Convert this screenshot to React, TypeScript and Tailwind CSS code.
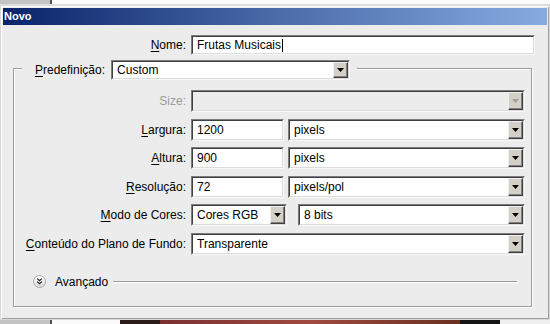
import React from "react";

function DropButton({ disabled = false }: { disabled?: boolean }) {
  return (
    <div className="w-[15px] h-full shrink-0 bg-[#d4d0c8] border border-t-[#f0f0f0] border-l-[#f0f0f0] border-r-[#404040] border-b-[#404040] shadow-[inset_-1px_-1px_0_#808080] flex items-center justify-center">
      <svg width="7" height="4" viewBox="0 0 7 4">
        <path d="M0 0H7L3.5 4Z" fill={disabled ? "#a0a0a0" : "#000"} />
      </svg>
    </div>
  );
}

function Sunken({
  className = "",
  children,
  bg = "bg-white",
}: {
  className?: string;
  children?: React.ReactNode;
  bg?: string;
}) {
  return (
    <div className={`flex border border-t-[#7c7c7c] border-l-[#7c7c7c] border-r-[#f8f8f8] border-b-[#f8f8f8] ${className}`}>
      <div className={`flex-1 flex min-w-0 border border-t-[#404040] border-l-[#404040] border-r-[#dcdcdc] border-b-[#dcdcdc] ${bg}`}>
        {children}
      </div>
    </div>
  );
}

function Combo({
  value,
  className = "",
  disabled = false,
}: {
  value: string;
  className?: string;
  disabled?: boolean;
}) {
  return (
    <Sunken className={className} bg={disabled ? "bg-[#ececec]" : "bg-white"}>
      <div className="flex-1 flex items-center pl-[4px] text-black whitespace-nowrap overflow-hidden">{value}</div>
      <DropButton disabled={disabled} />
    </Sunken>
  );
}

function Field({ value, className = "" }: { value: string; className?: string }) {
  return (
    <Sunken className={className}>
      <div className="flex-1 flex items-center pl-[4px] text-black whitespace-nowrap">{value}</div>
    </Sunken>
  );
}

function Label({ text, u = true, disabled = false }: { text: string; u?: boolean; disabled?: boolean }) {
  return (
    <div className={`w-[172px] shrink-0 text-right whitespace-nowrap ${disabled ? "text-[#9a9a9a]" : "text-black"}`}>
      {u ? (
        <>
          <span className="underline underline-offset-2">{text[0]}</span>
          {text.slice(1)}
        </>
      ) : (
        text
      )}
    </div>
  );
}

function Row({ children }: { children: React.ReactNode }) {
  return <div className="flex items-center h-[22px] gap-[5px]">{children}</div>;
}

export default function App() {
  return (
    <div className="w-[550px] h-[324px] overflow-hidden flex flex-col bg-[#ececec] font-['Liberation_Sans',Arial,sans-serif] text-[12px] leading-none">
      {/* top strip */}
      <div className="h-[5px] flex shrink-0 border-b border-[#e0e0e0]">
        <div className="w-[50px] bg-[#c4c4c4]" />
        <div className="w-[2px] bg-[#505050]" />
        <div className="flex-1 bg-[#fafafa]" />
      </div>

      {/* dialog */}
      <div className="h-[315px] shrink-0 flex flex-col bg-[#ececec] border border-[#d8d8d8] shadow-[inset_1px_1px_0_#fff,inset_-1px_-1px_0_#a0a0a0] p-[2px]">
        <div className="h-[17px] shrink-0 flex items-center pl-[1px] bg-gradient-to-r from-[#0a246a] via-[#4a6aa8] to-[#86abe0] text-white font-bold text-[11px]">
          Novo
        </div>

        <div className="flex-1 flex flex-col">
          {/* Nome */}
          <div className="flex items-center h-[20px] mt-[10px] gap-[5px]">
            <div className="w-[183px] text-right text-black">
              <span className="underline underline-offset-2">N</span>ome:
            </div>
            <Sunken className="w-[344px] h-[20px]">
              <div className="flex items-center pl-[4px] text-black whitespace-nowrap">
                Frutas Musicais
                <span className="inline-block w-[1px] h-[13px] bg-black ml-[1px]" />
              </div>
            </Sunken>
          </div>

          {/* group box */}
          <div className="ml-[10px] mt-[13px] w-[519px] h-[239px] border border-[#9c9c9c] shadow-[inset_1px_1px_0_#fff,1px_1px_0_#fff] flex flex-col">
            {/* legend */}
            <div className="-mt-[9px] ml-[8px] self-start flex items-center gap-[6px] pl-[13px] pr-[7px] bg-[#ececec] h-[20px]">
              <div className="text-black whitespace-nowrap">
                <span className="underline underline-offset-2">P</span>redefinição:
              </div>
              <Combo value="Custom" className="w-[239px] h-[20px]" />
            </div>

            <div className="mt-[10px] flex flex-col gap-[6.6px]">
              <Row>
                <Label text="Size:" u={false} disabled />
                <Combo value="" disabled className="w-[334px] h-[22px]" />
              </Row>
              <Row>
                <Label text="Largura:" />
                <Field value="1200" className="w-[93px] h-[22px]" />
                <Combo value="pixels" className="w-[237px] h-[22px] ml-[-1px]" />
              </Row>
              <Row>
                <Label text="Altura:" />
                <Field value="900" className="w-[93px] h-[22px]" />
                <Combo value="pixels" className="w-[237px] h-[22px] ml-[-1px]" />
              </Row>
              <Row>
                <Label text="Resolução:" />
                <Field value="72" className="w-[93px] h-[22px]" />
                <Combo value="pixels/pol" className="w-[237px] h-[22px] ml-[-1px]" />
              </Row>
              <Row>
                <Label text="Modo de Cores:" />
                <Combo value="Cores RGB" className="w-[96px] h-[22px]" />
                <Combo value="8 bits" className="w-[227px] h-[22px] ml-[6px]" />
              </Row>
              <Row>
                <Label text="Conteúdo do Plano de Fundo:" />
                <Combo value="Transparente" className="w-[334px] h-[22px]" />
              </Row>
            </div>

            {/* Avançado */}
            <div className="mt-[20px] h-[14px] flex items-center pl-[19px] pr-[14px]">
              <svg width="13" height="13" viewBox="0 0 13 13" className="shrink-0">
                <defs>
                  <linearGradient id="g" x1="0" y1="0" x2="0" y2="1">
                    <stop offset="0" stopColor="#ffffff" />
                    <stop offset="1" stopColor="#d8d8d8" />
                  </linearGradient>
                </defs>
                <circle cx="6.5" cy="6.5" r="6" fill="url(#g)" stroke="#a8a8a8" />
                <path d="M4.2 3.6L6.5 5.6L8.8 3.6M4.2 6.6L6.5 8.6L8.8 6.6" fill="none" stroke="#202020" strokeWidth="1.2" />
              </svg>
              <div className="ml-[9px] text-black whitespace-nowrap">Avançado</div>
              <div className="ml-[5px] flex-1 h-[1px] bg-[#9c9c9c] shadow-[0_1px_0_#fff]" />
            </div>
          </div>
        </div>
      </div>

      {/* bottom strip */}
      <div className="flex-1 flex">
        <div className="w-[50px] bg-[#c4c4c4]" />
        <div className="w-[2px] bg-[#505050]" />
        <div className="w-[68px] bg-[#fafafa]" />
        <div className="w-[40px] bg-[#2a1a18]" />
        <div className="w-[300px] bg-gradient-to-r from-[#7a3030] via-[#a04a40] to-[#6a3020]" />
        <div className="w-[40px] bg-[#141414]" />
        <div className="flex-1 bg-[#f0f0f0]" />
      </div>
    </div>
  );
}
